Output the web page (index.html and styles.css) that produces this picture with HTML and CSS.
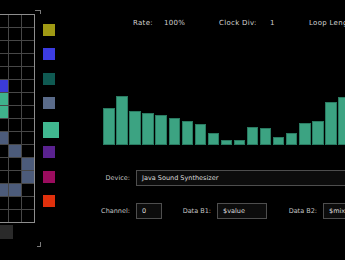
FILE: index.html
```html
<!DOCTYPE html>
<html>
<head>
<meta charset="utf-8">
<link rel="stylesheet" href="styles.css">
</head>
<body>
<div class="app">
  <div class="pane">
    <div class="mark-top"></div>
    <div class="grid">
      <div></div><div></div><div></div><div></div>
      <div></div><div></div><div></div><div></div>
      <div></div><div></div><div></div><div></div>
      <div></div><div></div><div></div><div></div>
      <div></div><div></div><div></div><div></div>
      <div></div><div class="b"></div><div></div><div></div>
      <div></div><div class="g"></div><div></div><div></div>
      <div></div><div class="g"></div><div></div><div></div>
      <div></div><div></div><div></div><div></div>
      <div></div><div class="s"></div><div></div><div></div>
      <div></div><div></div><div class="s"></div><div></div>
      <div></div><div></div><div></div><div class="s"></div>
      <div></div><div></div><div></div><div class="s"></div>
      <div></div><div class="s"></div><div class="s"></div><div></div>
      <div></div><div></div><div></div><div></div>
      <div></div><div></div><div></div><div></div>
    </div>
    <div class="thumb"></div>
    <div class="mark-bottom"></div>
  </div>
  <div class="palette">
    <div class="slot"><div class="sw olive"></div></div>
    <div class="slot"><div class="sw blue"></div></div>
    <div class="slot"><div class="sw teal"></div></div>
    <div class="slot"><div class="sw slate"></div></div>
    <div class="slot"><div class="sw green sel"></div></div>
    <div class="slot"><div class="sw purple"></div></div>
    <div class="slot"><div class="sw magenta"></div></div>
    <div class="slot"><div class="sw red"></div></div>
  </div>
  <div class="main">
    <div class="info">
      <span class="k w31">Rate:</span><span class="k w55">100%</span>
      <span class="k w51">Clock Div:</span><span class="k w39">1</span>
      <span class="k">Loop Length:</span>
    </div>
    <div class="chart">
      <div class="bar" style="height:37px"></div>
      <div class="bar" style="height:49px"></div>
      <div class="bar" style="height:34px"></div>
      <div class="bar" style="height:32px"></div>
      <div class="bar" style="height:30px"></div>
      <div class="bar" style="height:27px"></div>
      <div class="bar" style="height:24px"></div>
      <div class="bar" style="height:21px"></div>
      <div class="bar" style="height:12px"></div>
      <div class="bar" style="height:5px"></div>
      <div class="bar" style="height:5px"></div>
      <div class="bar" style="height:18px"></div>
      <div class="bar" style="height:17px"></div>
      <div class="bar" style="height:8px"></div>
      <div class="bar" style="height:12px"></div>
      <div class="bar" style="height:22px"></div>
      <div class="bar" style="height:24px"></div>
      <div class="bar" style="height:43px"></div>
      <div class="bar" style="height:48px"></div>
    </div>
    <div class="row device">
      <span class="lbl">Device:</span>
      <div class="box wide">Java Sound Synthesizer</div>
    </div>
    <div class="row">
      <span class="lbl">Channel:</span>
      <div class="box ch">0</div>
      <span class="lbl l2">Data B1:</span>
      <div class="box d1">$value</div>
      <span class="lbl l3">Data B2:</span>
      <div class="box d2">$mixer</div>
    </div>
  </div>
</div>
</body>
</html>
```
FILE: styles.css
```css
html, body {
  margin: 0;
  padding: 0;
  background: #000;
  overflow: hidden;
}
body {
  width: 345px;
  height: 260px;
  font-family: "DejaVu Sans", sans-serif;
}
.app {
  display: flex;
  width: 345px;
  height: 260px;
}
.pane {
  width: 41px;
  flex: none;
  display: flex;
  flex-direction: column;
  padding-top: 10px;
}
.mark-top {
  align-self: flex-end;
  width: 5px;
  height: 3px;
  border-top: 1px solid #7a7a7a;
  border-right: 1px solid #7a7a7a;
}
.grid {
  margin-left: -18px;
  width: max-content;
  display: grid;
  grid-template-columns: repeat(4, 12px);
  grid-auto-rows: 12px;
  gap: 1px;
  background: #474747;
  border: 1px solid #8e8e8e;
}
.grid > div { background: #000; }
.grid > .b { background: #3b3bd8; }
.grid > .g { background: #3fb28c; }
.grid > .s { background: #4c5b7a; }
.thumb {
  margin-top: 2px;
  width: 13px;
  height: 14px;
  background: #2a2a2a;
}
.mark-bottom {
  align-self: flex-end;
  margin-top: 3px;
  width: 3px;
  height: 4px;
  border-right: 1px solid #7a7a7a;
  border-bottom: 1px solid #7a7a7a;
}
.palette {
  width: 16px;
  flex: none;
  margin-left: 2px;
  padding-top: 24px;
  display: flex;
  flex-direction: column;
}
.slot { height: 24.43px; }
.sw { width: 12px; height: 12px; }
.sw.sel { width: 16px; height: 16px; }
.olive { background: #a09a14; }
.blue { background: #3c3ce2; }
.teal { background: #0f5a52; }
.slate { background: #5a6b8a; }
.green { background: #40b890; }
.purple { background: #5a2290; }
.magenta { background: #9a0c5e; }
.red { background: #e0300c; }
.main {
  flex: 1;
  min-width: 0;
  overflow: hidden;
  display: flex;
  flex-direction: column;
}
.info {
  margin-top: 18px;
  padding-left: 74px;
  display: flex;
  white-space: nowrap;
  font-size: 7px;
  line-height: 10px;
  letter-spacing: 0.3px;
  color: #d2d2d2;
}
.k { flex: none; }
.w31 { width: 31px; }
.w55 { width: 55px; }
.w51 { width: 51px; }
.w39 { width: 39px; }
.chart {
  height: 117px;
  margin-left: 44.3px;
  display: flex;
  align-items: flex-end;
  gap: 1.55px;
}
.bar {
  flex: none;
  width: 11.5px;
  box-sizing: border-box;
  background: #3ca382;
  border: 1px solid #2a7a61;
}
.row {
  display: flex;
  align-items: center;
  margin-top: 17px;
  height: 16px;
  white-space: nowrap;
  font-size: 6.5px;
}
.row.device { margin-top: 25px; }
.lbl {
  flex: none;
  width: 71px;
  text-align: right;
  color: #c4c4c4;
  margin-right: 6px;
}
.lbl.l2 { width: 49px; }
.lbl.l3 { width: 50px; }
.box {
  flex: none;
  box-sizing: border-box;
  height: 16px;
  line-height: 14px;
  padding-left: 5px;
  background: #0c0c0c;
  border: 1px solid #4e4e4e;
  color: #dcdcdc;
}
.box.wide { width: 260px; }
.box.ch { width: 26px; }
.box.d1 { width: 50px; }
.box.d2 { width: 50px; }
```
